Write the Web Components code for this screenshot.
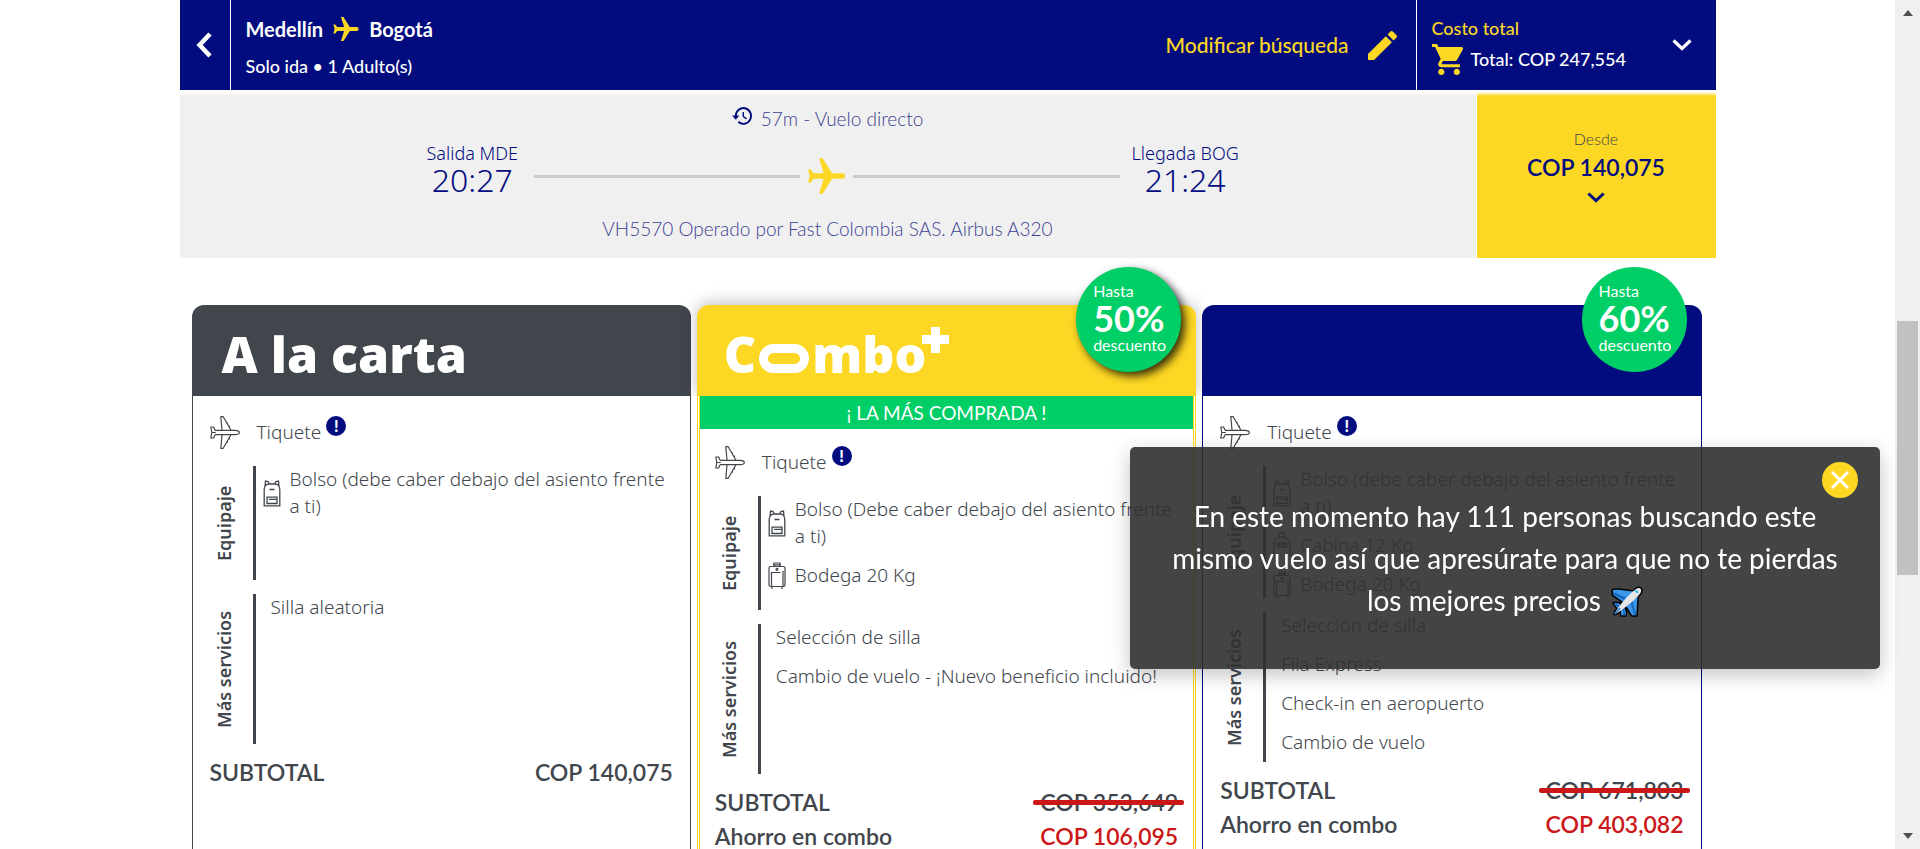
<!DOCTYPE html>
<html lang="es">
<head>
<meta charset="utf-8">
<meta name="viewport" content="width=device-width, initial-scale=1">
<title>Selecciona tu vuelo</title>
<style>
  :root {
    --navy: #020c7e; --yellow: #fcd723; --green: #00ce67; --ink: #41464c; --red: #cc1719;
    --sans: Lato, "Noto Sans", sans-serif;
    --body: "Noto Sans", Lato, sans-serif;
    --display: "Open Sans", sans-serif;
  }
  html, body { height: 100%; }
  body { margin: 0; overflow: hidden; background: #fff; color: var(--ink); font-family: var(--sans); }
</style>
</head>
<body>
<booking-page></booking-page>
<script>
const define = (name, html, setup) => customElements.define(name, class extends HTMLElement {
  connectedCallback() {
    if (this.shadowRoot) return;
    const t = document.createElement('template');
    t.innerHTML = html;
    this.attachShadow({ mode: 'open' }).append(t.content.cloneNode(true));
    if (setup) setup(this, this.shadowRoot);
  }
});

const ICONS = {
  flight: ['2 2 20 19', '<path fill="currentColor" transform="rotate(90 12 12)" d="M21 16v-2l-8-5V3.5c0-.83-.67-1.5-1.5-1.5S10 2.67 10 3.5V9l-8 5v2l8-2.5V19l-2 1.5V22l3.5-1 3.5 1v-1.5L13 19v-5.5l8 2.5z"/>'],
  edit: ['3 3 18 18', '<path fill="currentColor" d="M3 17.25V21h3.75L17.81 9.94l-3.75-3.75L3 17.25zM20.71 7.04c.39-.39.39-1.02 0-1.41l-2.34-2.34c-.39-.39-1.02-.39-1.41 0l-1.83 1.83 3.75 3.75 1.83-1.83z"/>'],
  cart: ['1 2 20 20', '<path fill="currentColor" d="M7 18c-1.1 0-1.99.9-1.99 2S5.9 22 7 22s2-.9 2-2-.9-2-2-2zM1 2v2h2l3.6 7.59-1.35 2.45c-.16.28-.25.61-.25.96 0 1.1.9 2 2 2h12v-2H7.42c-.14 0-.25-.11-.25-.25l.03-.12.9-1.63h7.45c.75 0 1.41-.41 1.75-1.03l3.58-6.49c.08-.14.12-.31.12-.48 0-.55-.45-1-1-1H5.21l-.94-2H1zm16 16c-1.1 0-1.99.9-1.99 2s.89 2 1.99 2 2-.9 2-2-.9-2-2-2z"/>'],
  back: ['0 0 16 26', '<path fill="none" stroke="currentColor" stroke-width="4.6" d="M14 2 3.6 13 14 24"/>'],
  down: ['0 0 20 12', '<path fill="none" stroke="currentColor" stroke-width="3.2" d="M1.500 1.500 10 9.500l8.500-8"/>'],
  clock: ['0 0 20 18', '<path fill="none" stroke="currentColor" stroke-width="1.900" d="M3.800 9a7.600 7.900 0 1 1 2.500 5.800"/><path fill="currentColor" d="M0 8.500h7.400l-3.700 4.200z"/><path fill="none" stroke="currentColor" stroke-width="1.400" d="M11.300 5v4.500l3.200 2.400"/>'],
  plane: ['0 0 30 33', '<g fill="none" stroke="currentColor" stroke-width="1.200" stroke-linejoin="round"><path d="M5 14.300 3.600 11H.8l1 5.500-1 5.500h2.800L5 18.700M5 14.300h20c2.500 0 4.300 1.200 4.300 2.200S27.500 18.700 25 18.700H5M1.800 16.500h4"/><path d="M12 14 10.800.7h2.400L20.800 14M12 19l-1.200 13.300h2.400L20.800 19M16 6.500l2 .5M18 9.800l2 .6M16 26.500l2-.5M18 23.200l2-.6"/></g>'],
  backpack: ['0 0 18 27', '<g fill="none" stroke="currentColor" stroke-width="1.300"><path d="M1.200 25.800V9.500C1.200 6.500 3 4 6 4h6c3 0 4.800 2.500 4.800 5.500v16.300zM2 6.500 2.500 1l2.500.5L6.500 4M16 6.500 15.500 1l-2.500.5L11.500 4"/><path d="M6.500 9.500h5M4 17.200h10v6.300H4zM6 19.300h8"/></g>'],
  cabin: ['0 0 18 27', '<g fill="none" stroke="currentColor" stroke-width="1.300"><path d="M1 25V12c0-4 3-7 8-7s8 3 8 7v13M6 5V1h6v4M4.500 11h9v4h-9zM4.500 12.700h9"/></g>'],
  suitcase: ['0 0 18 27', '<g fill="none" stroke="currentColor" stroke-width="1.200"><rect x="1" y="4.500" width="16" height="20" rx="1.500"/><path d="M6 4.500V1h6v3.500M5 2.800h8M3.500 24V10.500h9M15 11v13M4 25v2M14 25v2M14 9.800h2"/><circle cx="9" cy="7.300" r="1"/></g>'],
  close: ['0 0 18 18', '<path fill="none" stroke="currentColor" stroke-width="3" d="m1 1 16 16M17 1 1 17"/>'],
  airplane: ['-3 -3 96 96', '<g stroke="#000" stroke-width="9" stroke-linejoin="round"><path fill="#2f8fe8" d="M3 12 20 11l48 6-30 34L3 26zM77 24l-4 64H60L38 52zM5 52h16l6 8-8 8zM40 88H28l-2-18 10-6 6 14z"/><path d="M8 84C12 68 58 16 76 7c8-4 14 3 11 11C78 36 20 82 8 84z"/></g><path fill="#3b97ea" d="M3 12 20 11l48 6-30 34L3 26zM77 24l-4 64H60L38 52zM5 52h16l6 8-8 8zM40 88H28l-2-18 10-6 6 14z"/><path fill="#1c6bbb" d="m3 18 38 16-5 8L3 26zM66 88 56 50l5-6 12 44zM5 55h14l3 6-4 5zM34 88l-2-18 4-2 6 20z"/><path fill="#e6e6e6" d="M8 84C12 68 58 16 76 7c8-4 14 3 11 11C78 36 20 82 8 84z"/><path fill="#29c3ee" d="M70 13c5-1 10 3 10 7l-5 2-7-6z"/><path stroke="#2b83d6" stroke-width="5" d="m8 84 16-18"/>']
};
define('line-icon', '<style>:host{display:block;flex:none}svg{display:block;width:100%;height:100%}</style>', (el, root) => {
  const [box, art] = ICONS[el.getAttribute('name')];
  root.innerHTML += `<svg viewBox="${box}" aria-hidden="true">${art}</svg>`;
});

define('search-bar', `
<style>
  :host { display: flex; height: 90px; background: var(--navy); color: #fff; font: 500 18px/24px var(--sans); }
  button { font: inherit; color: inherit; background: none; border: 0; padding: 0; cursor: pointer; }
  .back { width: 51px; border-right: 1px solid #fff; display: grid; place-items: center; padding-right: 2px; }
  .back line-icon { width: 16px; height: 26px; }
  .trip { flex: 1; padding: 17px 0 0 15px; display: flex; flex-direction: column; gap: 13px; }
  .cities { display: flex; align-items: center; gap: 10px; font-size: 20px; font-weight: 700; }
  .cities line-icon { width: 26px; height: 24px; color: var(--yellow); }
  .edit { display: flex; align-items: center; gap: 19px; padding-right: 19px; font-size: 21px; color: var(--yellow); }
  .edit line-icon { width: 29px; height: 29px; }
  .cost { box-sizing: border-box; width: 300px; border-left: 1px solid #fff; padding: 0 24px 0 15px; display: flex; align-items: center; justify-content: space-between; text-align: left; }
  .label { color: var(--yellow); display: block; margin-bottom: 4px; }
  .total { display: flex; align-items: center; gap: 8px; }
  .total line-icon { width: 31px; height: 31px; color: var(--yellow); }
  .cost > line-icon { width: 20px; height: 12px; }
</style>
<button class="back" aria-label="Volver"><line-icon name="back"></line-icon></button>
<div class="trip">
  <div class="cities"><span>Medellín</span><line-icon name="flight"></line-icon><span>Bogotá</span></div>
  <div>Solo ida • 1 Adulto(s)</div>
</div>
<button class="edit">Modificar búsqueda<line-icon name="edit"></line-icon></button>
<button class="cost">
  <span><span class="label">Costo total</span><span class="total"><line-icon name="cart"></line-icon>Total: COP 247,554</span></span>
  <line-icon name="down"></line-icon>
</button>`);

define('flight-row', `
<style>
  :host { display: flex; gap: 1px; margin-top: 2px; color: var(--navy); font: 300 19px/24px var(--sans); }
  .info, .price { background-image: linear-gradient(#fff, #fff0 4px); }
  .info { flex: 1; background-color: #f0f0f0; padding: 15px 0 17px; display: flex; flex-direction: column; align-items: center; }
  .soft { color: #3b4292; }
  .duration { display: flex; gap: 9px; }
  .duration line-icon { width: 20px; height: 18px; color: var(--navy); }
  .route { width: 63%; margin: 10px 0 22px; padding-left: 6px; display: flex; align-items: center; gap: 12px; }
  .stop { text-align: center; font: 300 18px/24px var(--body); min-width: 100px; }
  .stop b { display: block; font-weight: 300; font-size: 32px; line-height: 30px; }
  .path { flex: 1; padding-top: 16px; display: flex; align-items: center; gap: 8px; }
  .path i { flex: 1; height: 3px; background: #ccc; }
  .path line-icon { width: 37px; height: 36px; color: var(--yellow); }
  .price { box-sizing: border-box; width: 239px; border: 0; background-color: var(--yellow); color: var(--navy); padding: 35px 0 0; font: 300 16px/24px var(--sans); display: flex; flex-direction: column; align-items: center; cursor: pointer; }
  .price span { color: #41464c; }
  .price b { font-size: 23px; font-weight: 600; line-height: 28px; margin: 2px 0 11px; }
  .price line-icon { width: 18px; height: 11px; }
</style>
<div class="info">
  <div class="duration soft"><line-icon name="clock"></line-icon>57m - Vuelo directo</div>
  <div class="route">
    <div class="stop">Salida MDE<b>20:27</b></div>
    <div class="path"><i></i><line-icon name="flight"></line-icon><i></i></div>
    <div class="stop">Llegada BOG<b>21:24</b></div>
  </div>
  <div class="soft">VH5570 Operado por Fast Colombia SAS. Airbus A320</div>
</div>
<button class="price"><span>Desde</span><b>COP 140,075</b><line-icon name="down"></line-icon></button>`);

define('discount-badge', `
<style>
  :host { position: absolute; top: -38px; right: 15px; box-sizing: border-box; width: 105px; height: 105px; padding: 0 0 3px 17px; border-radius: 50%;
    background: var(--green); color: #fff; display: flex; flex-direction: column; justify-content: center; font: 400 16px/20px var(--sans); }
  :host([raised]) { box-shadow: 4px 4px 8px rgba(0,0,0,.8); }
  b { font-size: 36px; line-height: 34px; }
</style>
<span>Hasta</span><b><slot></slot></b><span>descuento</span>`);

define('fare-group', `
<style>
  :host { display: flex; min-height: 114px; margin-bottom: 14px; }
  :host([services]) { min-height: 150px; margin-bottom: 11px; }
  h3 { margin: 0 15px 0 0; width: 28px; font: 600 18px/28px var(--body); text-align: center; writing-mode: vertical-rl; transform: rotate(180deg); }
  .items { flex: 1; border-left: 3px solid var(--ink); padding-left: 7px; display: flex; flex-direction: column; gap: 12px; }
  :host([services]) .items { padding-left: 15px; }
</style>
<h3></h3><div class="items"><slot></slot></div>`, (el, root) => { root.querySelector('h3').textContent = el.getAttribute('label'); });

define('fare-item', `
<style>
  :host { display: flex; align-items: center; gap: 9px; line-height: 27px; }
  line-icon { width: 18px; height: 27px; }
</style>
<span><slot></slot></span>`, (el, root) => {
  const icon = el.getAttribute('icon');
  if (icon) root.querySelector('span').insertAdjacentHTML('beforebegin', `<line-icon name="${icon}"></line-icon>`);
});

define('price-line', `
<style>
  :host { display: flex; justify-content: space-between; font: 600 23px/34px var(--sans); }
  :host([saving]) .amount { color: var(--red); }
  .amount { position: relative; }
  :host([struck]) .amount::after { content: ""; position: absolute; left: -7px; right: -6px; top: 15px; height: 5px; border-radius: 2px; background: var(--red); }
</style>
<span></span><span class="amount"><slot></slot></span>`, (el, root) => { root.querySelector('span').textContent = el.getAttribute('label'); });

define('fare-card', `
<style>
  :host { display: flex; flex-direction: column; position: relative; --tone: var(--ink); --edge: 1px; --line: solid; }
  :host([tone=yellow]) { --tone: var(--yellow); --edge: 3px; --line: double; z-index: 1; }
  :host([tone=navy]) { --tone: var(--navy); }
  header { box-sizing: border-box; height: 91px; border-radius: 12px 12px 0 0; background: var(--tone); padding: 6px 0 0 30px; display: flex; align-items: center; color: #fff; }
  :host([tone=yellow]) header { padding-left: 27px; box-shadow: 0 -2px 16px rgba(0,0,0,.25); clip-path: inset(-30px -30px 0 -30px); }
  .body { flex: 1; border: 0 var(--line) var(--tone); border-width: 0 var(--edge); font: 350 19px/27px var(--body); }
  .content { padding: 20px 17px 0; }
  :host([tone=yellow]) .content { padding: 17px 15px 0; }
  .ticket { display: flex; align-items: center; gap: 17px; height: 33px; margin-bottom: 17px; }
  .ticket > line-icon { width: 30px; height: 33px; }
  .note { align-self: flex-start; margin-left: -12px; width: 20px; height: 20px; padding: 0; border: 0; border-radius: 50%; background: var(--navy); color: #fff; font: 900 16px/20px var(--sans); cursor: pointer; }
</style>
<header><slot name="title"></slot></header>
<slot name="badge"></slot>
<div class="body">
  <slot name="ribbon"></slot>
  <div class="content">
    <div class="ticket"><line-icon name="plane"></line-icon><span>Tiquete</span><button class="note" aria-label="Más información">!</button></div>
    <slot></slot>
  </div>
</div>`);

define('fare-title', `<style>:host{display:block;font:800 50px/60px var(--display);color:#fff}</style><slot></slot>`);

define('combo-logo', `
<style>
  :host { display: flex; align-items: baseline; font: 800 50px/60px var(--display); color: #fff; }
  i { box-sizing: border-box; width: 50px; height: 29px; border: 9px solid #fff; border-radius: 15px; margin: 0 3px; }
  sup { align-self: flex-start; width: 27px; height: 26px; margin: 3px 0 0 -4px;
    background: linear-gradient(#fff, #fff) center / 9px 100% no-repeat, linear-gradient(#fff, #fff) center / 100% 9px no-repeat; }
</style>
<span>C</span><i></i><span>mbo</span><sup></sup>`);

define('top-ribbon', `<style>:host{display:block;background:var(--green);color:#fff;text-align:center;font:400 19px/33px var(--sans)}</style><slot></slot>`);

define('search-alert', `
<style>
  :host { position: fixed; right: 40px; bottom: 180px; z-index: 5; box-sizing: border-box; width: 750px; padding: 48px 20px; border-radius: 5px;
    background: rgba(48,48,48,.9); box-shadow: 0 6px 20px rgba(0,0,0,.24); color: #fff; text-align: center; font: 400 28px/42px var(--sans); }
  p { margin: 0; }
  line-icon { display: inline-block; width: 32px; height: 32px; vertical-align: -6px; margin-left: 3px; }
  button { position: absolute; top: 15px; right: 22px; width: 36px; height: 36px; padding: 0; border: 0; border-radius: 50%; background: var(--yellow); color: #fff; display: grid; place-items: center; cursor: pointer; }
  button line-icon { width: 18px; height: 18px; margin: 0; }
</style>
<p>En este momento hay 111 personas buscando este<br>mismo vuelo así que apresúrate para que no te pierdas<br>los mejores precios <line-icon name="airplane"></line-icon></p>
<button aria-label="Cerrar"><line-icon name="close"></line-icon></button>`);

define('page-scroll', `
<style>
  :host { width: 25px; background: #f0f0f0; display: flex; flex-direction: column; align-items: center; box-sizing: border-box; padding: 10px 0; }
  i { border: 5px solid transparent; }
  .up { border-top: 0; border-bottom: 6px solid #505050; }
  .down { border-bottom: 0; border-top: 6px solid #505050; }
  .track { flex: 1; width: 21px; display: flex; flex-direction: column; }
  .track::before { content: ""; flex: 305; }
  .track::after { content: ""; flex: 258; }
  .thumb { flex: 254; background: #c1c1c1; }
</style>
<i class="up"></i><div class="track"><div class="thumb"></div></div><i class="down"></i>`);

define('booking-page', `
<style>
  :host { display: flex; height: 100%; }
  main { flex: 1; overflow: hidden; display: flex; flex-direction: column; align-items: center; }
  .column { width: 100%; max-width: 1536px; flex: 1; display: flex; flex-direction: column; }
  .fares { flex: 1; padding: 47px 14px 0 12px; display: grid; grid-template-columns: repeat(3, 1fr); gap: 6px; }
</style>
<main>
  <div class="column">
    <search-bar></search-bar>
    <flight-row></flight-row>
    <section class="fares">
      <fare-card>
        <fare-title slot="title">A la carta</fare-title>
        <fare-group label="Equipaje">
          <fare-item icon="backpack">Bolso (debe caber debajo del asiento frente a ti)</fare-item>
        </fare-group>
        <fare-group services label="Más servicios"><fare-item>Silla aleatoria</fare-item></fare-group>
        <price-line label="SUBTOTAL">COP 140,075</price-line>
      </fare-card>
      <fare-card tone="yellow">
        <combo-logo slot="title" role="img" aria-label="Combo+"></combo-logo>
        <discount-badge slot="badge" raised>50%</discount-badge>
        <top-ribbon slot="ribbon">¡ LA MÁS COMPRADA !</top-ribbon>
        <fare-group label="Equipaje">
          <fare-item icon="backpack">Bolso (Debe caber debajo del asiento frente a ti)</fare-item>
          <fare-item icon="suitcase">Bodega 20 Kg</fare-item>
        </fare-group>
        <fare-group services label="Más servicios">
          <fare-item>Selección de silla</fare-item>
          <fare-item>Cambio de vuelo - ¡Nuevo beneficio incluido!</fare-item>
        </fare-group>
        <price-line struck label="SUBTOTAL">COP 353,649</price-line>
        <price-line saving label="Ahorro en combo">COP 106,095</price-line>
      </fare-card>
      <fare-card tone="navy">
        <discount-badge slot="badge">60%</discount-badge>
        <fare-group label="Equipaje">
          <fare-item icon="backpack">Bolso (debe caber debajo del asiento frente a ti)</fare-item>
          <fare-item icon="cabin">Cabina 12 Kg</fare-item>
          <fare-item icon="suitcase">Bodega 20 Kg</fare-item>
        </fare-group>
        <fare-group services label="Más servicios">
          <fare-item>Selección de silla</fare-item>
          <fare-item>Fila Express</fare-item>
          <fare-item>Check-in en aeropuerto</fare-item>
          <fare-item>Cambio de vuelo</fare-item>
        </fare-group>
        <price-line struck label="SUBTOTAL">COP 671,803</price-line>
        <price-line saving label="Ahorro en combo">COP 403,082</price-line>
      </fare-card>
    </section>
  </div>
</main>
<page-scroll></page-scroll>
<search-alert role="status"></search-alert>`);
</script>
</body>
</html>
